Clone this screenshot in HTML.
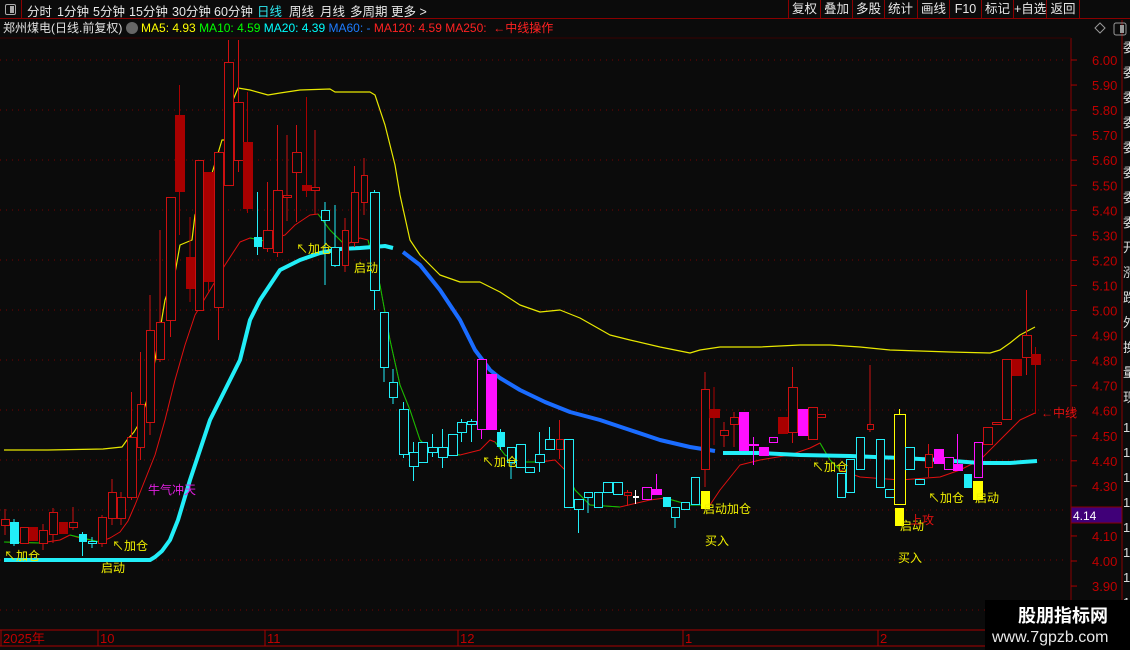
<!DOCTYPE html>
<html><head><meta charset="utf-8"><style>
*{margin:0;padding:0;box-sizing:border-box}
body{width:1130px;height:650px;background:#0b0b0b;overflow:hidden;font-family:"Liberation Sans","Noto Sans CJK SC",sans-serif;position:relative;color:#ddd}
#top{position:absolute;left:0;top:0;width:1130px;height:19px;border-bottom:1px solid #8a0000;font-size:12.5px}
#top span{position:absolute;top:1px;color:#e8e8e8;white-space:nowrap}
.btn{position:absolute;top:0;height:19px;border-left:1px solid #8a0000;color:#e8e8e8;font-size:12.5px;text-align:center;line-height:19px;white-space:nowrap;width:32px}
#title{position:absolute;top:20px;left:3px;font-size:12px;white-space:nowrap;line-height:17px}
svg{position:absolute;left:0;top:0}
</style></head><body>
<div id="top">
<div style="position:absolute;left:0;top:0;width:22px;height:19px;border-right:1px solid #8a0000"><div style="position:absolute;left:5px;top:4px;width:11px;height:11px;border:1px solid #aaa;border-radius:2px"><div style="position:absolute;right:1px;top:1px;width:4px;height:7px;background:#aaa"></div></div></div>
<span style="left:27px">分时</span><span style="left:57px">1分钟</span><span style="left:93px">5分钟</span><span style="left:129px">15分钟</span><span style="left:172px">30分钟</span><span style="left:214px">60分钟</span><span style="left:257px;color:#2ee8f0">日线</span><span style="left:289px">周线</span><span style="left:320px">月线</span><span style="left:350px">多周期</span><span style="left:391px">更多 &gt;</span>
<div class="btn" style="left:788px">复权</div><div class="btn" style="left:820px">叠加</div><div class="btn" style="left:852px">多股</div><div class="btn" style="left:884px">统计</div><div class="btn" style="left:917px">画线</div><div class="btn" style="left:949px">F10</div><div class="btn" style="left:981px">标记</div><div class="btn" style="left:1013px;width:33px">+自选</div><div class="btn" style="left:1046px;width:34px;border-right:1px solid #8a0000">返回</div>
</div>
<div id="title"><span style="color:#e0e0e0">郑州煤电(日线.前复权)</span> <span style="display:inline-block;width:12px;height:12px;border-radius:6px;background:#666;vertical-align:-2px"></span> <span style="color:#ff0">MA5: 4.93</span> <span style="color:#0f0">MA10: 4.59</span> <span style="color:#0ff">MA20: 4.39</span> <span style="color:#1e7cff">MA60: -</span> <span style="color:#f22">MA120: 4.59</span> <span style="color:#f22">MA250:</span> &nbsp;<span style="color:#f22">←中线操作</span></div>
<svg id="s" width="1130" height="650" xmlns="http://www.w3.org/2000/svg"></svg>
<script>
var s=document.getElementById('s'),h='';
function L(a,c,w){h+='<polyline fill="none" stroke="'+c+'" stroke-width="'+w+'" stroke-linejoin="round" points="'+a.join(' ')+'"/>';}
h+='<line x1="1071" y1="38" x2="1071" y2="630" stroke="#8a0000"/><line x1="1122" y1="20" x2="1122" y2="650" stroke="#8a0000"/>';
h+='<line x1="0" y1="38" x2="1071" y2="38" stroke="#3a0000"/>';
for(var y=60;y<=610;y+=50)h+='<line x1="0" y1="'+y+'" x2="1068" y2="'+y+'" stroke="#7a0000" stroke-dasharray="1,5"/>';
var p=['6.00','5.90','5.80','5.70','5.60','5.50','5.40','5.30','5.20','5.10','5.00','4.90','4.80','4.70','4.60','4.50','4.40','4.30','4.20','4.10','4.00','3.90'];
for(var i=0;i<p.length;i++){var yy=60+i*25.05;h+='<line x1="1071" y1="'+yy+'" x2="1077" y2="'+yy+'" stroke="#a00"/><text x="1092" y="'+(yy+5)+'" fill="#c00000" font-size="13">'+p[i]+'</text>';}
h+='<rect x="1071" y="507" width="51" height="16" fill="#400078" stroke="#800"/><text x="1073" y="520" fill="#fff" font-size="12">4.14</text>';
var st='委委委委委委委委开涨跌外换量现';for(i=0;i<15;i++)h+='<text x="1123" y="'+(52+i*25)+'" fill="#ddd" font-size="13">'+st[i]+'</text>';
for(i=0;i<9;i++)h+='<text x="1123" y="'+(432+i*25)+'" fill="#ddd" font-size="13">1</text>';
h+='<rect x="1114" y="23" width="12" height="12" fill="none" stroke="#999" rx="2"/><rect x="1120" y="25" width="4" height="8" fill="#999"/><path d="M1100 23l5 5-5 5-5-5z" fill="none" stroke="#999"/>';
h+='<line x1="0" y1="630" x2="985" y2="630" stroke="#a00"/><line x1="0" y1="646" x2="985" y2="646" stroke="#a00"/>';
[[3,'2025年'],[100,'10'],[267,'11'],[460,'12'],[685,'1'],[880,'2']].forEach(function(a){h+='<line x1="'+(a[0]-2)+'" y1="630" x2="'+(a[0]-2)+'" y2="646" stroke="#a00"/><text x="'+a[0]+'" y="643" fill="#c00000" font-size="13">'+a[1]+'</text>';});
L([[4,450],[48,450],[103,449],[122,447],[127,440],[134,432],[140,422],[150,390],[165,300],[175,273],[180,245],[192,240],[195,215],[210,180],[222,140],[226,140],[233,100],[238,88],[250,90],[268,95],[280,93],[300,90],[330,89],[335,92],[370,92],[375,95],[385,125],[395,165],[400,195],[410,240],[420,255],[440,275],[460,282],[480,282],[500,292],[520,305],[540,312],[560,310],[580,318],[610,335],[630,340],[660,347],[690,353],[700,350],[720,347],[760,347],[800,345],[830,345],[860,347],[890,350],[950,352],[990,353],[1000,350],[1010,343],[1020,335],[1035,327]],'#e8e800',1.2);
L([[4,542],[40,543],[60,540],[70,535],[80,538],[100,542],[110,538],[120,532],[128,521],[135,505],[145,480],[155,455],[165,420],[175,380],[185,345],[195,315],[210,290],[225,265],[240,242],[250,238],[265,241],[285,235],[295,225],[310,215],[318,214],[330,230],[345,245],[360,238],[368,240],[380,285],[390,340],[400,385],[410,410],[420,440],[430,450],[460,455],[480,450],[490,440],[495,442],[505,455],[520,462],[540,462],[555,460],[565,470],[575,490],[590,505],[620,507],[650,500],[665,498],[690,505],[710,505],[720,490],[740,465],[760,460],[790,455],[810,448],[820,443],[830,460],[840,470],[860,477],[900,480],[940,477],[960,470],[980,460],[1000,440],[1020,420],[1035,413]],'#e01010',1);
L([[4,542],[40,543]],'#0c0',1);L([[70,535],[100,542]],'#0c0',1);L([[250,238],[265,241]],'#0c0',1);L([[318,214],[330,230],[345,245]],'#0c0',1);L([[368,240],[380,285],[390,340],[400,385],[410,410],[420,440],[430,450],[460,455]],'#0c0',1);L([[495,442],[505,455],[520,462],[540,462]],'#0c0',1);L([[565,470],[575,490],[590,505],[620,507]],'#0c0',1);L([[665,498],[690,505],[710,505]],'#0c0',1);L([[820,443],[830,460],[840,470]],'#0c0',1);
L([[4,560],[150,560],[155,557],[162,551],[170,540],[178,520],[190,480],[200,450],[210,420],[220,400],[230,380],[240,360],[250,320],[260,300],[270,285],[280,270],[300,260],[320,253],[340,249],[360,248],[385,246],[393,248]],'#22eef8',4);
L([[403,252],[420,265],[440,290],[460,320],[475,350],[490,370],[500,378],[520,390],[545,402],[570,412],[600,420],[630,430],[660,440],[690,447],[715,451]],'#1a6cff',4);
L([[723,453],[760,453],[800,455],[850,456],[900,458],[940,460],[980,463],[1010,463],[1037,461]],'#22eef8',4);
var C=[[1,9,519,525,509,535,'r'],[10,18,522,543,519,546,'C'],[20,28,527,543,0,0,'r'],[29,37,527,540,0,0,'R'],[39,47,530,543,524,550,'r'],[49,57,512,534,508,543,'r'],[59,67,522,533,0,0,'R'],[69,77,522,527,507,530,'r'],[79,86,534,541,532,556,'C'],[88,96,541,543,537,548,'c'],[98,106,517,543,515,547,'r'],[108,116,492,518,479,525,'r'],[117,125,497,518,492,525,'r'],[127,136,437,497,392,500,'r'],[137,144,404,447,352,460,'r'],[146,154,330,422,295,435,'r'],[156,164,322,359,230,362,'r'],[166,175,197,320,0,337,'r'],[175,184,115,191,85,235,'R'],[186,194,257,288,217,302,'R'],[195,203,160,310,0,0,'r'],[204,213,172,281,0,292,'R'],[214,223,152,307,0,340,'r'],[224,233,62,185,40,0,'r'],[234,243,102,160,40,172,'r'],[243,252,142,208,92,213,'R'],[254,261,237,246,192,255,'C'],[263,272,230,248,182,252,'r'],[273,282,190,252,125,257,'r'],[283,291,195,197,135,221,'r'],[292,301,152,172,125,222,'r'],[302,311,185,190,97,197,'R'],[311,319,187,190,130,215,'r'],[321,329,210,220,202,285,'c'],[331,339,247,265,205,267,'c'],[342,348,230,265,218,272,'r'],[351,358,192,242,166,247,'r'],[361,367,175,202,158,215,'r'],[370,379,192,290,190,310,'c'],[380,388,312,367,0,382,'c'],[389,397,382,397,369,404,'c'],[399,408,409,454,402,458,'c'],[409,418,452,466,442,481,'c'],[418,427,442,462,0,0,'c'],[428,437,447,452,434,457,'c'],[438,447,447,457,429,468,'c'],[448,457,434,455,0,0,'c'],[457,466,422,432,419,442,'c'],[467,476,421,424,419,442,'c'],[477,486,359,429,0,439,'m'],[487,496,374,429,0,0,'M'],[497,504,432,446,429,450,'C'],[507,515,447,462,0,479,'c'],[516,525,444,467,0,0,'c'],[525,534,467,472,0,0,'c'],[535,544,454,462,432,472,'c'],[545,554,439,449,427,0,'c'],[556,563,439,449,420,459,'r'],[564,573,439,507,0,0,'c'],[574,583,499,509,0,533,'c'],[584,592,492,497,0,513,'c'],[594,602,492,507,0,0,'c'],[603,612,482,492,0,0,'c'],[613,622,482,494,0,0,'c'],[624,631,492,495,490,506,'r'],[633,638,496,497,490,504,'w'],[642,651,487,499,0,0,'m'],[652,661,489,494,474,0,'M'],[663,670,497,506,0,0,'C'],[671,679,507,517,0,528,'c'],[681,689,502,509,0,0,'c'],[691,699,477,504,0,0,'c'],[701,709,389,469,372,487,'r'],[701,709,491,508,0,0,'Y'],[709,719,409,417,387,445,'R'],[720,728,430,435,422,447,'r'],[730,738,417,424,412,447,'r'],[739,748,412,450,0,0,'M'],[749,758,444,445,437,465,'m'],[759,768,447,455,0,0,'M'],[769,777,437,442,0,0,'m'],[778,787,417,433,0,0,'R'],[788,797,387,432,367,443,'r'],[798,807,409,435,0,0,'M'],[808,817,407,439,0,0,'r'],[817,825,414,417,0,0,'r'],[837,845,473,497,0,0,'c'],[846,854,459,492,0,0,'c'],[856,864,437,469,0,0,'c'],[867,873,424,429,365,432,'r'],[876,884,439,487,0,0,'c'],[885,894,489,497,0,0,'c'],[894,905,414,504,409,0,'y'],[895,903,508,525,0,0,'Y'],[905,914,447,469,0,0,'c'],[915,924,479,484,0,0,'c'],[925,932,454,467,444,477,'r'],[934,943,449,463,0,0,'M'],[944,953,457,469,0,0,'m'],[953,962,464,470,434,0,'M'],[964,971,474,487,0,0,'C'],[974,982,442,477,0,0,'m'],[973,982,481,499,0,0,'Y'],[983,992,427,444,0,0,'r'],[992,1001,422,424,0,0,'r'],[1002,1011,359,419,0,0,'r'],[1012,1021,359,375,0,0,'R'],[1022,1031,335,357,290,375,'r'],[1031,1040,354,364,347,414,'R']];
var col={r:'#cc1010',R:'#a80000',c:'#22eef8',C:'#22eef8',m:'#ff10ff',M:'#ff10ff',y:'#ffff00',Y:'#ffff00',w:'#ffffff'};
C.forEach(function(c){var cl=col[c[6]],xm=(c[0]+c[1])/2;
if(c[4]||c[5])h+='<line x1="'+xm+'" y1="'+(c[4]||c[2])+'" x2="'+xm+'" y2="'+(c[5]||c[3])+'" stroke="'+cl+'"/>';
var fill=(c[6]==c[6].toUpperCase())?cl:'#0b0b0b';
h+='<rect x="'+(c[0]+.5)+'" y="'+(c[2]+.5)+'" width="'+(c[1]-c[0])+'" height="'+Math.max(1,c[3]-c[2])+'" fill="'+fill+'" stroke="'+cl+'"/>';});
function T(x,y,t,c){h+='<text x="'+x+'" y="'+y+'" fill="'+(c||'#f0f000')+'" font-size="12">'+t+'</text>';}
T(4,560,'↖加仓');T(112,550,'↖加仓');T(101,572,'启动');T(148,494,'牛气冲天','#e020e0');T(296,253,'↖加仓');T(354,272,'启动');T(482,466,'↖加仓');T(703,513,'启动加仓');T(705,545,'买入');T(812,471,'↖加仓');T(900,530,'启动');T(910,524,'上攻','#e01010');T(898,562,'买入');T(928,502,'↖加仓');T(975,502,'启动');T(1041,417,'←中线','#e01010');
h+='<rect x="985" y="600" width="145" height="50" fill="#000"/><text x="1018" y="622" fill="#fff" font-size="18" font-weight="bold">股朋指标网</text><text x="992" y="642" fill="#e8e8e8" font-size="16">www.7gpzb.com</text>';
s.innerHTML=h;
</script>
</body></html>
